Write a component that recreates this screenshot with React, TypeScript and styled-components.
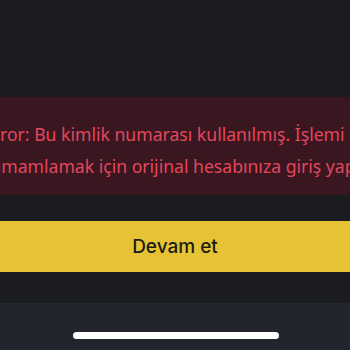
import React from "react";
import styled, { createGlobalStyle } from "styled-components";

const Global = createGlobalStyle`
  html, body { margin: 0; padding: 0; background: #1b1c20; }
  body { width: 350px; height: 350px; overflow: hidden; }
`;

const Page = styled.div`
  width: 350px;
  height: 350px;
  display: flex;
  flex-direction: column;
  background: #1b1c20;
  overflow: hidden;
`;

const ErrorBand = styled.div`
  margin-top: 97px;
  height: 98px;
  box-sizing: border-box;
  padding-top: 8px;
  background: #3a1620;
  display: flex;
  flex-direction: column;
  justify-content: center;
  overflow: hidden;
`;

const ErrorLine = styled.div<{ $shift: number }>`
  white-space: nowrap;
  margin-left: ${(p) => p.$shift}px;
  font-family: "Noto Sans", "Liberation Sans", sans-serif;
  font-size: 17.6px;
  line-height: 32px;
  color: #e2475f;
`;

const ActionButton = styled.button`
  margin-top: 26px;
  height: 51px;
  width: 100%;
  border: none;
  padding: 0;
  background: #e6c335;
  color: #1c1b17;
  font-family: "Inter", "Liberation Sans", sans-serif;
  font-size: 19px;
  font-weight: 500;
  display: flex;
  align-items: center;
  justify-content: center;
`;

const HomeArea = styled.div`
  margin-top: auto;
  height: 47px;
  background: #22252e;
  display: flex;
  justify-content: center;
  padding-top: 29px;
  box-sizing: border-box;
`;

const HomeBar = styled.div`
  width: 206px;
  height: 7px;
  border-radius: 4px;
  background: #ffffff;
  margin-left: 2px;
`;

export default function App() {
  return (
    <>
      <Global />
      <Page>
        <ErrorBand>
          <ErrorLine $shift={-17}>Error: Bu kimlik numarası kullanılmış. İşlemi</ErrorLine>
          <ErrorLine $shift={-15}>tamamlamak için orijinal hesabınıza giriş yapın.</ErrorLine>
        </ErrorBand>
        <ActionButton>Devam et</ActionButton>
        <HomeArea>
          <HomeBar />
        </HomeArea>
      </Page>
    </>
  );
}
